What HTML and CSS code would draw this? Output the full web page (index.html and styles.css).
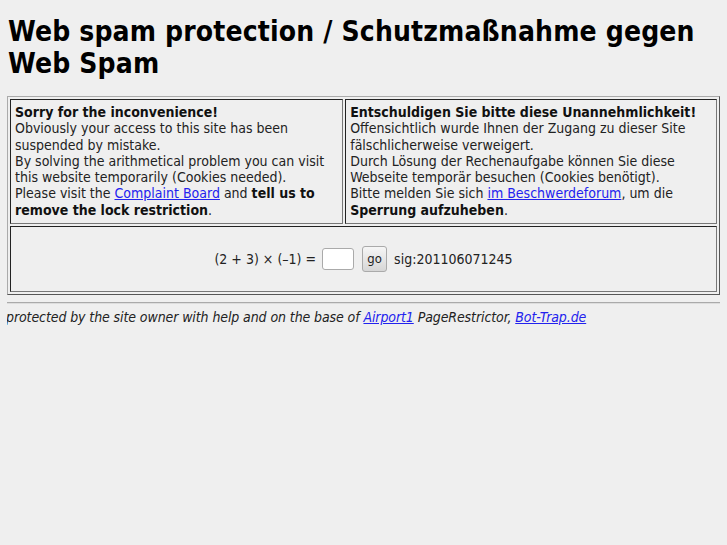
FILE: index.html
```html
<!DOCTYPE html>
<html><head><meta charset="utf-8"><title>Web spam protection</title><link rel="stylesheet" href="styles.css"></head>
<body>
<h1 class="title">Web spam protection / Schutzmaßnahme gegen Web Spam</h1>
<table class="box" border="1" cellspacing="2" cellpadding="4">
<tr>
<td class="msg"><b>Sorry for the inconvenience!</b><br>Obviously your access to this site has been suspended by mistake.<br>By solving the arithmetical problem you can visit this website temporarily (Cookies needed).<br>Please visit the <a href="#">Complaint Board</a> and <b>tell us to remove the lock restriction</b>.</td>
<td class="msg"><b>Entschuldigen Sie bitte diese Unannehmlichkeit!</b><br>Offensichtlich wurde Ihnen der Zugang zu dieser Site fälschlicherweise verweigert.<br>Durch Lösung der Rechenaufgabe können Sie diese Webseite temporär besuchen (Cookies benötigt).<br>Bitte melden Sie sich <a href="#">im Beschwerdeforum</a>, um die <b>Sperrung aufzuheben</b>.</td>
</tr>
<tr>
<td class="quiz" colspan="2"><form class="qform"><span>(2 + 3) × (–1) =</span><input class="answer" type="text"><button class="go" type="button">go</button><span>sig:201106071245</span></form></td>
</tr>
</table>
<hr class="rule">
<p class="foot">protected by the site owner with help and on the base of <a href="#">Airport1</a> PageRestrictor, <a href="#">Bot-Trap.de </a></p>
</body></html>
```
FILE: styles.css
```css
html{background:#efefef}
body{margin:8px 7px;font:14px/1.164 "DejaVu Sans Condensed","DejaVu Sans",sans-serif;color:#222}
.title{font-size:28px;font-weight:bold;color:#000;margin:8px 0 16px 1px;line-height:32px;letter-spacing:.15px}
.box{width:100%;border-color:#aaa;border-collapse:separate}
.msg{vertical-align:top;padding:4px 4px 5px 4px;border-color:#777}
.msg b{color:#111}
.quiz{text-align:center;height:56px;border-color:#777}
.qform{margin:0;display:flex;align-items:center;justify-content:center}
.answer{box-sizing:border-box;width:32px;height:22px;margin:0 8px 0 6px;border:1px solid #aaa;border-radius:3px;padding:1px 2px;background:#fff}
.go{box-sizing:border-box;height:26px;width:25px;padding:0;margin:0 7px 0 0;font:13px "DejaVu Sans Condensed",sans-serif;color:#222;border:1px solid #aaa;border-radius:3px;background:linear-gradient(#f6f6f6,#d6d6d6)}
a{color:#22e}
.rule{margin:7px 0 5px;border:0;border-top:1px solid #aaa;border-bottom:1px solid #ddd}
.foot{margin:0;font-style:italic;color:#222;margin-left:-1px;letter-spacing:-.1px}
```
